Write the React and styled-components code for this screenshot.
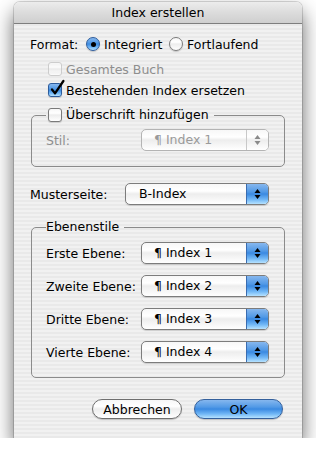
import React from "react";
import styled, { createGlobalStyle, css } from "styled-components";

const GlobalStyle = createGlobalStyle`
  html, body {
    margin: 0;
    padding: 0;
    background: #ffffff;
  }
  body {
    font-family: "DejaVu Sans", "Liberation Sans", sans-serif;
    font-size: 12.5px;
    color: #000;
  }
`;

const aquaBlue = css`
  background: linear-gradient(
    to bottom,
    #86b7ee 0%,
    #5199e6 40%,
    #3a89e1 50%,
    #72b8f6 78%,
    #b6e2ff 100%
  );
`;

const aquaWhite = css`
  background: linear-gradient(
    to bottom,
    #f7f7f7 0%,
    #ffffff 35%,
    #ededed 50%,
    #f6f6f6 75%,
    #ffffff 100%
  );
`;

const Window = styled.div`
  margin: 2px 0 0 14px;
  width: 288px;
  height: 436px;
  display: flex;
  flex-direction: column;
  border-radius: 6px 6px 0 0;
  background: repeating-linear-gradient(
    to bottom,
    #f1f1f1 0px,
    #f1f1f1 2px,
    #e9e9e9 2px,
    #e9e9e9 4px
  );
  box-shadow: 0 10px 20px rgba(0, 0, 0, 0.62), 0 0 0 1px rgba(0, 0, 0, 0.14);
`;

const TitleBar = styled.div`
  height: 21px;
  line-height: 21px;
  text-align: center;
  border-bottom: 1px solid #7e7e7e;
  border-radius: 6px 6px 0 0;
  background: linear-gradient(to bottom, #ececec 0%, #dcdcdc 50%, #cfcfcf 100%);
`;

const Body = styled.div`
  flex: 1;
  display: flex;
  flex-direction: column;
  padding: 10px 17px 0 16px;
`;

const Row = styled.div`
  display: flex;
  align-items: center;
  height: ${(p) => p.$h || 20}px;
  margin-top: ${(p) => p.$mt || 0}px;
  padding-left: ${(p) => p.$indent || 0}px;
  color: ${(p) => (p.$disabled ? "#8e8e8e" : "#000")};
  white-space: nowrap;
`;

const Label = styled.span`
  width: ${(p) => p.$w}px;
  flex: none;
`;

const Option = styled.label`
  display: inline-flex;
  align-items: center;
  gap: 4px;
  width: ${(p) => (p.$w ? `${p.$w}px` : "auto")};
  flex: none;
`;

const Radio = styled.span`
  position: relative;
  width: 14px;
  height: 14px;
  box-sizing: border-box;
  border-radius: 50%;
  flex: none;
  border: 1px solid ${(p) => (p.$on ? "#2d5c9c" : "#7a7a7a")};
  ${(p) => (p.$on ? aquaBlue : aquaWhite)};
  box-shadow: 0 1px 1px rgba(0, 0, 0, 0.18);
  ${(p) =>
    p.$on &&
    css`
      &::after {
        content: "";
        position: absolute;
        left: 3.5px;
        top: 3.5px;
        width: 5px;
        height: 5px;
        border-radius: 50%;
        background: #000;
      }
    `}
`;

const Box = styled.span`
  position: relative;
  width: 14px;
  height: 14px;
  box-sizing: border-box;
  border-radius: 3px;
  flex: none;
  border: 1px solid
    ${(p) => (p.$on ? "#2d5c9c" : p.$disabled ? "#c2c2c2" : "#7a7a7a")};
  ${(p) => (p.$on ? aquaBlue : aquaWhite)};
  opacity: ${(p) => (p.$disabled ? 0.75 : 1)};
  box-shadow: ${(p) => (p.$disabled ? "none" : "0 1px 1px rgba(0,0,0,0.15)")};
`;

const CheckMark = styled.svg`
  position: absolute;
  left: 1px;
  top: -4px;
  width: 15px;
  height: 16px;
  overflow: visible;
`;

const Checkbox = ({ on, disabled }) => (
  <Box $on={on} $disabled={disabled}>
    {on && (
      <CheckMark viewBox="0 0 15 16">
        <path
          d="M2 9.5 L5 13.4 L13.4 1"
          fill="none"
          stroke="#000"
          strokeWidth="2.3"
          strokeLinecap="round"
          strokeLinejoin="round"
        />
      </CheckMark>
    )}
  </Box>
);

const Group = styled.fieldset`
  margin: ${(p) => p.$mt}px 0 0 1px;
  padding: ${(p) => p.$pt}px 14px ${(p) => p.$pb}px 14px;
  border: 1px solid #8b8b8b;
  border-radius: 5px;
  min-width: 0;
`;

const Legend = styled.legend`
  padding: 0 5px 0 ${(p) => p.$pl || 0}px;
  height: 20px;
  line-height: 20px;
`;

const LegendInner = styled.span`
  display: inline-flex;
  align-items: center;
  gap: 4px;
  height: 20px;
  vertical-align: top;
`;

const PopupBox = styled.div`
  display: flex;
  width: ${(p) => p.$w}px;
  height: 22px;
  box-sizing: border-box;
  flex: none;
  border: 1px solid ${(p) => (p.$disabled ? "#b4b4b4" : "#7c7c7c")};
  border-radius: 5px;
  overflow: hidden;
  ${aquaWhite};
  color: ${(p) => (p.$disabled ? "#9a9a9a" : "#000")};
  box-shadow: ${(p) => (p.$disabled ? "none" : "0 1px 1px rgba(0,0,0,0.15)")};
`;

const PopupText = styled.span`
  flex: 1;
  padding-left: ${(p) => p.$pl}px;
  line-height: 20px;
`;

const PopupArrows = styled.span`
  width: 21px;
  flex: none;
  display: flex;
  align-items: center;
  justify-content: center;
  border-left: 1px solid ${(p) => (p.$disabled ? "#c8c8c8" : "#3a6cb0")};
  ${(p) => (p.$disabled ? aquaWhite : aquaBlue)};
`;

const Popup = ({ w, text, disabled, pl = 12 }) => (
  <PopupBox $w={w} $disabled={disabled}>
    <PopupText $pl={pl}>{text}</PopupText>
    <PopupArrows $disabled={disabled}>
      <svg width="7" height="12" viewBox="0 0 7 12">
        <path d="M3.5 1 L6.5 5 L0.5 5 Z" fill={disabled ? "#8a8a8a" : "#000"} />
        <path d="M0.5 7 L6.5 7 L3.5 11 Z" fill={disabled ? "#8a8a8a" : "#000"} />
      </svg>
    </PopupArrows>
  </PopupBox>
);

const ButtonRow = styled.div`
  display: flex;
  justify-content: flex-end;
  gap: 12px;
  margin-top: 21px;
  padding-right: 2px;
`;

const Button = styled.button`
  width: ${(p) => p.$w}px;
  height: 20px;
  padding: 0;
  border-radius: 10px;
  font: inherit;
  color: #000;
  border: 1px solid ${(p) => (p.$default ? "#34609c" : "#6f6f6f")};
  ${(p) => (p.$default ? aquaBlue : aquaWhite)};
  box-shadow: 0 1px 1px rgba(0, 0, 0, 0.2);
`;

const levels = [
  ["Erste Ebene:", "¶ Index 1"],
  ["Zweite Ebene:", "¶ Index 2"],
  ["Dritte Ebene:", "¶ Index 3"],
  ["Vierte Ebene:", "¶ Index 4"],
];

export default function App() {
  return (
    <>
      <GlobalStyle />
      <Window>
        <TitleBar>Index erstellen</TitleBar>
        <Body>
          <Row>
            <Label $w={56}>Format:</Label>
            <Option $w={83}>
              <Radio $on />
              Integriert
            </Option>
            <Option>
              <Radio />
              Fortlaufend
            </Option>
          </Row>
          <Row $mt={5} $indent={18} $disabled>
            <Option>
              <Checkbox disabled />
              Gesamtes Buch
            </Option>
          </Row>
          <Row $mt={1} $indent={18}>
            <Option>
              <Checkbox on />
              Bestehenden Index ersetzen
            </Option>
          </Row>

          <Group $mt={5} $pt={4} $pb={15}>
            <Legend $pl={2}>
              <LegendInner>
                <Checkbox />
                Überschrift hinzufügen
              </LegendInner>
            </Legend>
            <Row $h={22} $disabled>
              <Label $w={95}>Stil:</Label>
              <Popup w={128} text="¶ Index 1" disabled />
            </Row>
          </Group>

          <Row $h={22} $mt={16}>
            <Label $w={95}>Musterseite:</Label>
            <Popup w={144} text="B-Index" pl={13} />
          </Row>

          <Group $mt={12} $pt={5} $pb={14}>
            <Legend $pl={0}>Ebenenstile</Legend>
            {levels.map(([label, value], i) => (
              <Row key={label} $h={22} $mt={i === 0 ? 0 : 11}>
                <Label $w={95}>{label}</Label>
                <Popup w={128} text={value} />
              </Row>
            ))}
          </Group>

          <ButtonRow>
            <Button $w={90}>Abbrechen</Button>
            <Button $w={89} $default>
              OK
            </Button>
          </ButtonRow>
        </Body>
      </Window>
    </>
  );
}
